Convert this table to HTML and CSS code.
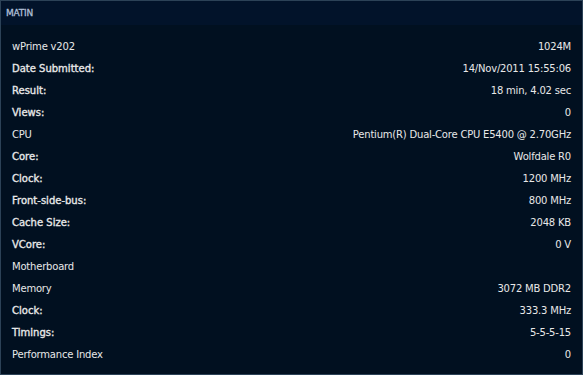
FILE: index.html
```html
<!DOCTYPE html>
<html>
<head>
<meta charset="utf-8">
<link rel="stylesheet" href="styles.css">
</head>
<body>
<div class="panel">
  <div class="header">MATIN</div>
  <div class="rows">
    <div class="row"><span>wPrime v202</span><span>1024M</span></div>
    <div class="row"><span class="b">Date Submitted:</span><span>14/Nov/2011 15:55:06</span></div>
    <div class="row"><span class="b">Result:</span><span>18 min, 4.02 sec</span></div>
    <div class="row"><span class="b">Views:</span><span>0</span></div>
    <div class="row"><span>CPU</span><span>Pentium(R) Dual-Core CPU E5400 @ 2.70GHz</span></div>
    <div class="row"><span class="b">Core:</span><span>Wolfdale R0</span></div>
    <div class="row"><span class="b">Clock:</span><span>1200 MHz</span></div>
    <div class="row"><span class="b">Front-side-bus:</span><span>800 MHz</span></div>
    <div class="row"><span class="b">Cache Size:</span><span>2048 KB</span></div>
    <div class="row"><span class="b">VCore:</span><span>0 V</span></div>
    <div class="row"><span>Motherboard</span><span></span></div>
    <div class="row"><span>Memory</span><span>3072 MB DDR2</span></div>
    <div class="row"><span class="b">Clock:</span><span>333.3 MHz</span></div>
    <div class="row"><span class="b">Timings:</span><span>5-5-5-15</span></div>
    <div class="row"><span>Performance Index</span><span>0</span></div>
  </div>
</div>
</body>
</html>
```

FILE: styles.css
```css
html, body {
  margin: 0;
  padding: 0;
  background: #011020;
}
.panel {
  width: 583px;
  height: 375px;
  box-sizing: border-box;
  border: 1px solid #2c4257;
  background: #011020;
  font-family: "DejaVu Sans", Verdana, sans-serif;
  color: #e8e8e8;
}
.header {
  height: 24px;
  box-sizing: border-box;
  padding: 7px 0 0 5px;
  font-size: 9px;
  color: #aebfd6;
  background: #02132a;
  letter-spacing: -0.2px;
  -webkit-text-stroke: 0.3px #aebfd6;
}
.rows {
  padding: 10px 11px 0 11px;
  display: flex;
  flex-direction: column;
}
.row {
  height: 22px;
  display: flex;
  justify-content: space-between;
  align-items: center;
  font-size: 10px;
  letter-spacing: -0.2px;
}
.b {
  letter-spacing: 0;
  -webkit-text-stroke: 0.35px #e8e8e8;
}
```
